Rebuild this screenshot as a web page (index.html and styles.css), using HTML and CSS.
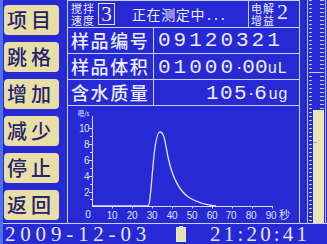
FILE: index.html
```html
<!DOCTYPE html>
<html lang="zh">
<head>
<meta charset="utf-8">
<link rel="stylesheet" href="styles.css">
</head>
<body>
<div class="screen">
  <div class="upper">
    <div class="side">
      <div class="btn">项目</div>
      <div class="btn">跳格</div>
      <div class="btn">增加</div>
      <div class="btn">减少</div>
      <div class="btn">停止</div>
      <div class="btn">返回</div>
    </div>
    <div class="main">
      <div class="row row-top">
        <div class="mini"><span>搅拌</span><span>速度</span></div>
        <div class="speed">3</div>
        <div class="state">正在测定中<span class="dots">...</span></div>
        <div class="gain"><div class="mini"><span>电解</span><span>增益</span></div><span class="gain-val">2</span></div>
      </div>
      <div class="row"><div class="label">样品编号</div><div class="value">09120321</div></div>
      <div class="row"><div class="label">样品体积</div><div class="value">01000<span class="dot">·</span><span class="tight">00</span><span class="unit">uL</span></div></div>
      <div class="row"><div class="label">含水质量</div><div class="value value-mass"><span class="mid">105</span><span class="dot">·</span><span class="mid">6</span><span class="unit">ug</span></div></div>
      <div class="chart">
        <svg width="231" height="117" viewBox="68 106 231 117" xmlns="http://www.w3.org/2000/svg">
          <g class="axis">
            <line x1="92.5" y1="116" x2="92.5" y2="206.5"/>
            <line x1="92" y1="206.5" x2="273" y2="206.5"/>
            <line x1="89" y1="128.5" x2="92" y2="128.5"/>
            <line x1="90" y1="136.5" x2="92" y2="136.5"/>
            <line x1="89" y1="144.5" x2="92" y2="144.5"/>
            <line x1="90" y1="152.5" x2="92" y2="152.5"/>
            <line x1="89" y1="160.5" x2="92" y2="160.5"/>
            <line x1="90" y1="168.5" x2="92" y2="168.5"/>
            <line x1="89" y1="176.5" x2="92" y2="176.5"/>
            <line x1="90" y1="184.5" x2="92" y2="184.5"/>
            <line x1="89" y1="192.5" x2="92" y2="192.5"/>
            <line x1="90" y1="199.5" x2="92" y2="199.5"/>
            <line x1="112.5" y1="206" x2="112.5" y2="208.5"/>
            <line x1="132.5" y1="206" x2="132.5" y2="208.5"/>
            <line x1="152.5" y1="206" x2="152.5" y2="208.5"/>
            <line x1="172.5" y1="206" x2="172.5" y2="208.5"/>
            <line x1="192.5" y1="206" x2="192.5" y2="208.5"/>
            <line x1="212.5" y1="206" x2="212.5" y2="208.5"/>
            <line x1="232.5" y1="206" x2="232.5" y2="208.5"/>
            <line x1="252.5" y1="206" x2="252.5" y2="208.5"/>
            <line x1="272.5" y1="206" x2="272.5" y2="208.5"/>
          </g>
          <path class="curve" d="M92 206 L148 206 C150 206 151 186 153 166 C155 142 157 132 160 132 C164 132 165 141 168 157 C172 176 178 190 189 197.5 C198 203 206 205 216 206"/>
          <g class="ylab">
            <text class="unit-lab" x="89" y="116">嗯/s</text>
            <text x="89" y="132">10</text>
            <text x="89" y="147.5">8</text>
            <text x="89" y="163.5">6</text>
            <text x="89" y="179.5">4</text>
            <text x="89" y="195.5">2</text>
          </g>
          <g class="xlab">
            <text x="88" y="217.5">0</text>
            <text x="112" y="219">10</text>
            <text x="132" y="219">20</text>
            <text x="152" y="219">30</text>
            <text x="172" y="219">40</text>
            <text x="192" y="219">50</text>
            <text x="212" y="219">60</text>
            <text x="231" y="219">70</text>
            <text x="251" y="219">80</text>
            <text x="271" y="219">90</text>
          </g>
          <text class="sec" x="279" y="219">秒</text>
        </svg>
      </div>
    </div>
    <div class="gauge">
      <div class="ticks-left"></div>
      <div class="gauge-body">
        <div class="gauge-empty"></div>
        <div class="gauge-fill"></div>
      </div>
    </div>
  </div>
  <div class="status">
    <span class="date">2009-12-03</span>
    <span class="battery"><span class="battery-cap"></span><span class="battery-cell"></span></span>
    <span class="time">21:20:41</span>
  </div>
</div>
</body>
</html>
```

FILE: styles.css
```css
* {
  box-sizing: border-box;
  margin: 0;
  padding: 0;
}

html, body {
  width: 327px;
  height: 244px;
  overflow: hidden;
}

body {
  background: #2629d4;
  color: #eceef9;
  font-family: "Noto Sans CJK SC", "Noto Sans", sans-serif;
}

.screen {
  width: 327px;
  height: 244px;
  display: flex;
  flex-direction: column;
  border-left: 3px solid #4a72ee;
}

.upper {
  height: 224px;
  display: flex;
  border-bottom: 1px solid #c9d0f6;
}

/* left buttons */
.side {
  width: 65px;
  border-right: 1px solid #c9d0f6;
  display: flex;
  flex-direction: column;
  gap: 7px;
  padding: 5px 0 0 1px;
}

.btn {
  width: 55px;
  height: 30px;
  background: #e8dea6;
  border-radius: 4px;
  color: #24246e;
  font-size: 20px;
  font-weight: 500;
  line-height: 30px;
  letter-spacing: 4px;
  padding-left: 3px;
}

/* main table */
.main {
  width: 232px;
  border-top: 1px solid #c9d0f6;
  border-right: 1px solid #c9d0f6;
  display: flex;
  flex-direction: column;
}

.row {
  height: 26px;
  display: flex;
  border-bottom: 1px solid #c9d0f6;
}

.row-top {
  height: 27px;
  align-items: center;
}

.mini {
  width: 26px;
  display: flex;
  flex-direction: column;
  font-size: 11px;
  line-height: 12px;
  letter-spacing: 1px;
}

.row-top > .mini {
  margin-left: 3px;
}

.speed {
  width: 17px;
  height: 22px;
  margin-left: 1px;
  border: 1px solid #e6e1c4;
  color: #f2ebc6;
  font-family: "Liberation Serif", serif;
  font-size: 21px;
  line-height: 20px;
  text-align: center;
}

.state {
  margin-left: 17px;
  font-size: 14px;
  letter-spacing: 0.6px;
  line-height: 20px;
}

.dots {
  letter-spacing: 3px;
  margin-left: 2px;
}

.gain {
  margin-left: auto;
  width: 51px;
  height: 26px;
  border-left: 1px solid #c9d0f6;
  display: flex;
  align-items: center;
  padding-left: 2px;
}

.gain-val {
  margin-left: 0;
  font-family: "Liberation Serif", serif;
  font-size: 22px;
  line-height: 22px;
  margin-top: -4px;
}

.label {
  width: 86px;
  border-right: 1px solid #c9d0f6;
  padding-left: 3px;
  font-size: 18px;
  font-weight: 500;
  letter-spacing: 1.6px;
  line-height: 25px;
}

.value {
  flex: 1;
  padding-left: 4px;
  font-family: "Liberation Mono", monospace;
  font-size: 21px;
  letter-spacing: 3px;
  line-height: 25px;
  display: flex;
  align-items: baseline;
}

.dot {
  font-family: "Liberation Sans", sans-serif;
  font-size: 19px;
  letter-spacing: 0;
}

.tight {
  letter-spacing: 0;
}

.unit {
  font-size: 16px;
  letter-spacing: 0;
}

.value-mass {
  padding-left: 52px;
}

.mid {
  letter-spacing: 1.4px;
}

/* chart */
.chart {
  flex: 1;
  display: flex;
}

.chart svg {
  display: block;
}

.axis line {
  stroke: #d6dbf7;
  stroke-width: 1;
}

.curve {
  fill: none;
  stroke: #e3e6f8;
  stroke-width: 1.3;
}

.ylab text {
  fill: #dfe3f7;
  font-family: "Liberation Sans", sans-serif;
  font-size: 10px;
  letter-spacing: -0.5px;
  text-anchor: end;
}

.ylab .unit-lab {
  font-family: "Noto Sans CJK SC", sans-serif;
  font-size: 6.5px;
  letter-spacing: -0.3px;
}

.xlab text {
  fill: #dfe3f7;
  font-family: "Liberation Sans", sans-serif;
  font-size: 10px;
  letter-spacing: -0.3px;
  text-anchor: middle;
}

.sec {
  fill: #dfe3f7;
  font-family: "Noto Sans CJK SC", sans-serif;
  font-size: 11px;
}

/* right gauge */
.gauge {
  width: 19px;
  margin-left: 7px;
  border-left: 1px solid #b8c2f4;
  border-right: 1px solid #b8c2f4;
  display: flex;
  padding-left: 1px;
  background:
    linear-gradient(#c9d0f6, #c9d0f6) 1px 72px / 15px 1px no-repeat;
}

.ticks-left {
  width: 4px;
  background: repeating-linear-gradient(to bottom, #c9d0f6 0 1px, transparent 1px 4px);
  background-size: 3px 100%;
  background-repeat: no-repeat;
}

.gauge-body {
  flex: 1;
  display: flex;
  flex-direction: column;
  margin-right: 1px;
}

.gauge-empty {
  height: 110px;
  background: repeating-linear-gradient(to bottom, #c9d0f6 0 1px, transparent 1px 4px) right top / 4px 100% no-repeat;
}

.gauge-fill {
  flex: 1;
  background:
    linear-gradient(#a8a898, #a8a898) 0 32px / 4px 1px no-repeat,
    #ece4b8;
}

/* status bar */
.status {
  flex: 1;
  display: grid;
  grid-template-columns: 172px 11px 1fr;
  align-items: center;
  color: #e3e6f8;
  font-family: "Liberation Serif", serif;
  font-size: 21px;
  line-height: 20px;
}

.date {
  padding-left: 2px;
  letter-spacing: 4.8px;
}

.battery {
  display: flex;
  flex-direction: column;
  align-items: center;
  height: 16px;
}

.battery-cap {
  width: 4px;
  height: 1px;
  background: #e3e6f8;
}

.battery-cell {
  width: 10px;
  flex: 1;
  border: 1px solid #e3e6f8;
  background: #ece2a8;
}

.time {
  padding-left: 24px;
  letter-spacing: 3.2px;
}
```
